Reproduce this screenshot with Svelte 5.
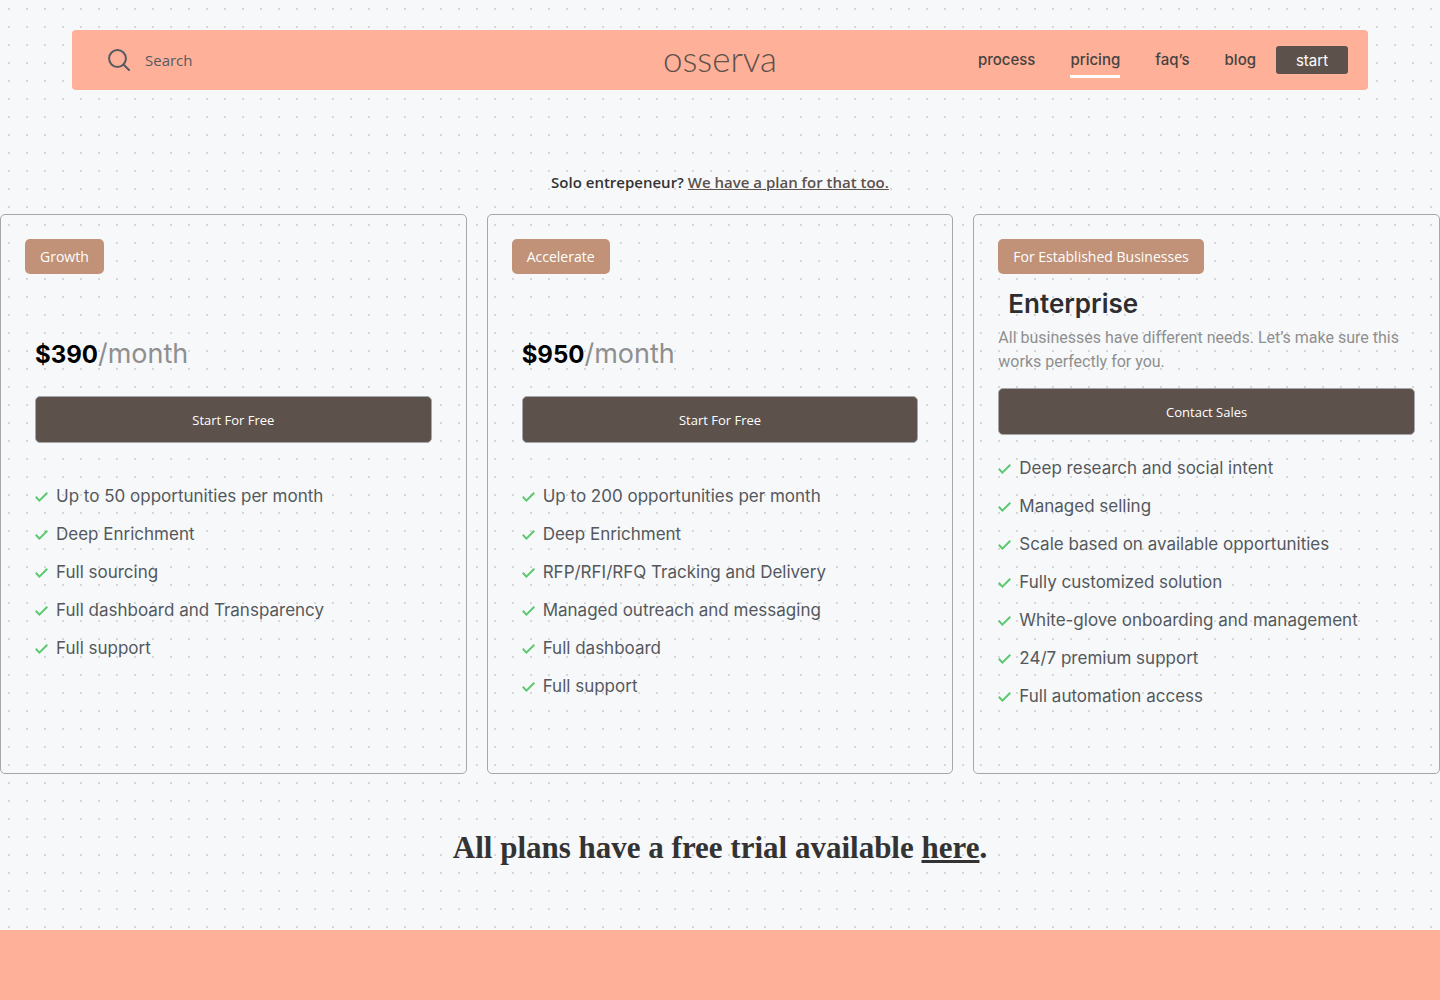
<script lang="ts">
  interface Plan {
    badge: string;
    title?: string;
    price?: string;
    description?: string;
    action: string;
    features: string[];
  }

  const links = ["process", "pricing", "faq’s", "blog"];
  let activeLink = $state("pricing");
  let query = $state("");

  const plans: Plan[] = [
    {
      badge: "Growth",
      price: "$390",
      action: "Start For Free",
      features: [
        "Up to 50 opportunities per month",
        "Deep Enrichment",
        "Full sourcing",
        "Full dashboard and Transparency",
        "Full support",
      ],
    },
    {
      badge: "Accelerate",
      price: "$950",
      action: "Start For Free",
      features: [
        "Up to 200 opportunities per month",
        "Deep Enrichment",
        "RFP/RFI/RFQ Tracking and Delivery",
        "Managed outreach and messaging",
        "Full dashboard",
        "Full support",
      ],
    },
    {
      badge: "For Established Businesses",
      title: "Enterprise",
      description:
        "All businesses have different needs. Let’s make sure this works perfectly for you.",
      action: "Contact Sales",
      features: [
        "Deep research and social intent",
        "Managed selling",
        "Scale based on available opportunities",
        "Fully customized solution",
        "White-glove onboarding and management",
        "24/7 premium support",
        "Full automation access",
      ],
    },
  ];
</script>

<div class="page">
  <header class="navbar">
    <form class="search" role="search">
      <label for="search" aria-label="Search">
        <svg width="22" height="22" viewBox="0 0 22 22" fill="none">
          <circle cx="9.5" cy="9.5" r="8.4" />
          <path d="M15.5 15.5 L21 21" />
        </svg>
      </label>
      <input id="search" type="text" placeholder="Search" bind:value={query} />
    </form>
    <a class="logo" href="#home">osserva</a>
    <nav>
      {#each links as link}
        <a
          class="nav-link"
          class:active={link === activeLink}
          href="#{link}"
          onclick={() => (activeLink = link)}>{link}</a
        >
      {/each}
      <button class="start">start</button>
    </nav>
  </header>

  <main>
    <p class="solo">
      Solo entrepeneur? <a href="#solo">We have a plan for that too.</a>
    </p>

    <section class="plans">
      {#each plans as plan}
        <article class="plan" class:enterprise={plan.title}>
          <span class="badge">{plan.badge}</span>
          <div class="plan-body">
            {#if plan.title}
              <h2>{plan.title}</h2>
              <p class="description">{plan.description}</p>
            {:else}
              <p class="price"><b>{plan.price}</b>/month</p>
            {/if}
            <button class="action">{plan.action}</button>
            <ul>
              {#each plan.features as feature}
                <li>
                  <svg width="13" height="12" viewBox="0 0 13 12" fill="none">
                    <path d="M0.8 6.8 L4.4 10.6 L12.3 2.8" />
                  </svg>
                  {feature}
                </li>
              {/each}
            </ul>
          </div>
        </article>
      {/each}
    </section>

    <h1>All plans have a free trial available <a href="#trial">here</a>.</h1>
  </main>

  <footer></footer>
</div>

<style>
  :global(body) {
    margin: 0;
    background-color: #f7f8fa;
  }
  .page {
    --peach: #ffb099;
    --brown: #5c514b;
    --heading: Inter, "Open Sans", sans-serif;
    --text: "Open Sans", "Noto Sans", sans-serif;
    min-height: 100vh;
    display: flex;
    flex-direction: column;
    color: #333;
    font-family: var(--text);
    /* 2px dots on an 18px grid */
    background-image: conic-gradient(
      from 0deg at 2px 2px,
      transparent 270deg,
      #d5d7da 270deg
    );
    background-size: 18px 18px;
    background-position: 8px 8px;
  }
  .navbar {
    width: 90%;
    height: 60px;
    margin: 30px auto 0;
    padding: 0 20px;
    box-sizing: border-box;
    display: grid;
    grid-template-columns: 1fr auto 1fr;
    align-items: center;
    background-color: var(--peach);
    border-radius: 4px;
  }
  .search {
    display: flex;
    align-items: center;
    gap: 15px;
    padding-left: 16px;
  }
  .search label {
    display: flex;
  }
  .search svg {
    stroke: #555a60;
    stroke-width: 2;
    stroke-linecap: round;
  }
  .search input {
    width: 200px;
    padding: 0;
    border: none;
    outline: none;
    background: transparent;
    font-family: var(--text);
    font-size: 15px;
    color: #555a60;
  }
  .search input::placeholder {
    color: #555a60;
    opacity: 1;
  }
  .logo {
    padding-bottom: 4px;
    font-family: Lato, sans-serif;
    font-weight: 300;
    font-size: 35px;
    line-height: 40px;
    color: var(--brown);
    text-decoration: none;
  }
  nav {
    display: flex;
    align-items: center;
    justify-content: flex-end;
    font-family: var(--heading);
    font-size: 15px;
  }
  .nav-link {
    margin-right: 35px;
    padding: 4px 0 1px;
    border-bottom: 3px solid transparent;
    line-height: 28px;
    font-weight: 500;
    color: #474340;
    text-decoration: none;
  }
  .nav-link.active {
    border-color: #fff;
  }
  .nav-link:nth-last-child(2) {
    margin-right: 20px;
  }
  .start {
    width: 72px;
    height: 28px;
    padding: 0;
    border: none;
    border-radius: 3px;
    background-color: var(--brown);
    color: #fff;
    font-family: var(--heading);
    font-size: 15px;
    cursor: pointer;
  }
  .solo {
    margin: 80px 0 20px;
    text-align: center;
    font-size: 15px;
    font-weight: 600;
    line-height: 24px;
  }
  .solo a {
    color: var(--brown);
  }
  .plans {
    display: grid;
    grid-template-columns: repeat(3, 1fr);
    gap: 20px;
  }
  .plan {
    min-height: 560px;
    padding: 24px;
    box-sizing: border-box;
    border: 1px solid #a5a7aa;
    border-radius: 5px;
  }
  .badge {
    display: inline-block;
    padding: 0 15px;
    border-radius: 5px;
    background-color: #c19277;
    color: #fff;
    font-size: 14px;
    line-height: 35px;
  }
  .plan-body {
    display: flex;
    flex-direction: column;
    padding: 60px 10px 0;
  }
  .enterprise .plan-body {
    padding: 10px 0 0;
  }
  h2 {
    margin: 0 0 2px;
    padding-left: 10px;
    font-family: var(--heading);
    font-size: 26px;
    font-weight: 600;
    line-height: 40px;
    color: #2e2e30;
  }
  .description {
    margin: 0 0 14px;
    font-family: Roboto, sans-serif;
    font-size: 16px;
    line-height: 24px;
    color: #8f8f8f;
  }
  .price {
    margin: 0 0 21px;
    font-family: var(--heading);
    font-size: 27px;
    line-height: 40px;
    color: #8f8f8f;
  }
  .price b {
    font-size: 24px;
    font-weight: 700;
    color: #000;
  }
  .action {
    height: 47px;
    border: 1px solid #a5a7aa;
    border-radius: 5px;
    background-color: var(--brown);
    color: #fff;
    font-family: var(--text);
    font-size: 13px;
    cursor: pointer;
  }
  ul {
    margin: 41px 0 0;
    padding: 0;
    display: flex;
    flex-direction: column;
    gap: 14px;
    list-style: none;
    font-family: var(--heading);
    font-size: 17px;
    line-height: 24px;
    color: #54585d;
  }
  .enterprise ul {
    margin-top: 21px;
  }
  li {
    display: flex;
    align-items: center;
    gap: 8px;
  }
  li svg {
    flex: none;
    stroke: #5bc96f;
    stroke-width: 2;
  }
  h1 {
    margin: 52px 0 60px;
    text-align: center;
    font-family: "Liberation Serif", serif;
    font-size: 31px;
    font-weight: 700;
    line-height: 44px;
  }
  h1 a {
    color: inherit;
    text-decoration-thickness: 3px;
  }
  footer {
    flex: 1;
    min-height: 70px;
    background-color: var(--peach);
  }
</style>
